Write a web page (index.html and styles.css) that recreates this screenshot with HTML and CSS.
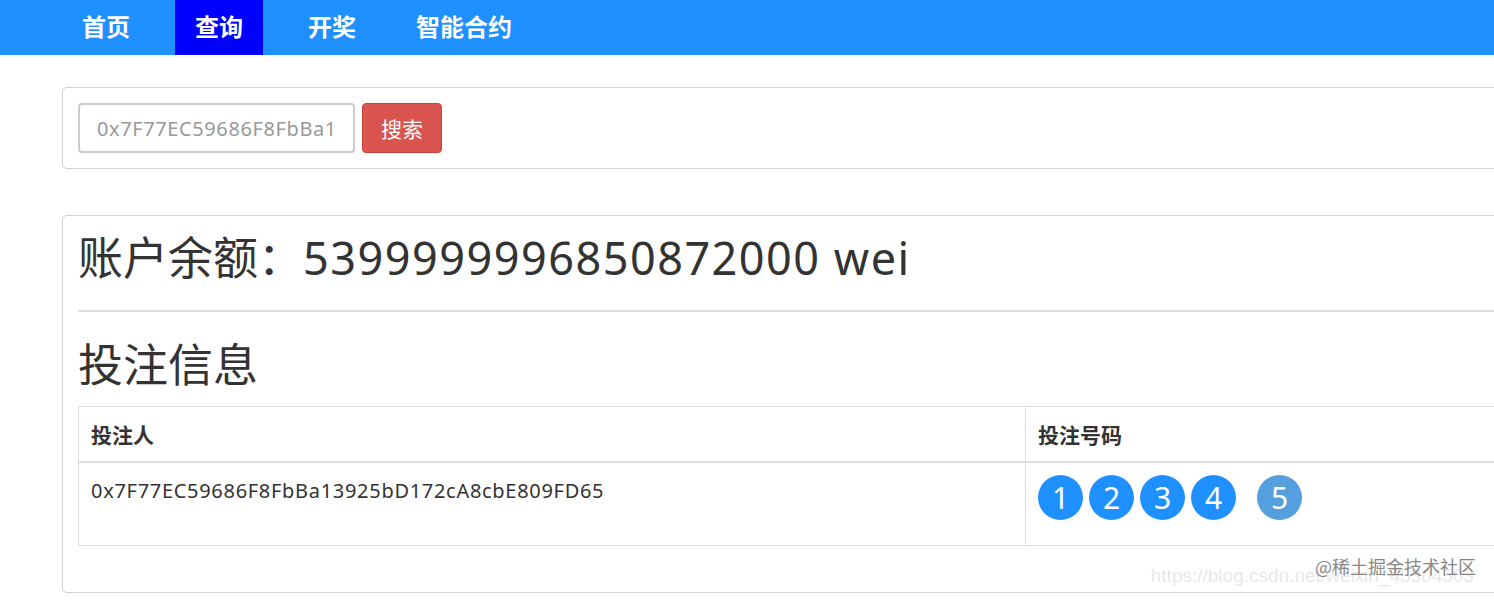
FILE: index.html
```html
<!DOCTYPE html>
<html lang="zh-CN">
<head>
<meta charset="utf-8">
<title>查询</title>
<link rel="stylesheet" href="styles.css">
</head>
<body>
<nav class="navbar">
  <ul class="nav">
    <li class="nav-item">首页</li>
    <li class="nav-item active">查询</li>
    <li class="nav-item">开奖</li>
    <li class="nav-item last">智能合约</li>
  </ul>
</nav>
<main class="container">
  <section class="panel search-panel">
    <input class="search-input" type="text" placeholder="0x7F77EC59686F8FbBa13925bD172cA8cbE809FD65">
    <button class="btn-danger" type="button">搜索</button>
  </section>
  <section class="panel result-panel">
    <h1 class="balance">账户余额：<span class="latin">5399999996850872000 wei</span></h1>
    <hr class="divider">
    <h2 class="section-title">投注信息</h2>
    <table class="bet-table">
      <thead>
        <tr>
          <th class="col-player">投注人</th>
          <th>投注号码</th>
        </tr>
      </thead>
      <tbody>
        <tr>
          <td class="col-player">0x7F77EC59686F8FbBa13925bD172cA8cbE809FD65</td>
          <td>
            <div class="balls">
              <span class="ball">1</span>
              <span class="ball">2</span>
              <span class="ball">3</span>
              <span class="ball">4</span>
              <span class="ball special">5</span>
            </div>
          </td>
        </tr>
      </tbody>
    </table>
  </section>
</main>
<div class="watermark">
  <span class="wm-url">https://blog.csdn.net/weixin_45304503</span>
  <span class="wm-main">@稀土掘金技术社区</span>
</div>
</body>
</html>
```
FILE: styles.css
```css
html, body {
  margin: 0;
  padding: 0;
}
body {
  font-family: "Noto Sans CJK SC", "Noto Sans", sans-serif;
  color: #333;
  background: #fff;
  overflow: hidden;
  width: 1494px;
  height: 601px;
  position: relative;
}
.navbar {
  background: #1e90ff;
  height: 55px;
}
.nav {
  list-style: none;
  margin: 0;
  padding: 0 0 0 62px;
  display: flex;
  height: 55px;
  gap: 25px;
}
.nav-item {
  padding: 0 20px 5px;
  box-sizing: border-box;
  font-size: 24px;
  font-weight: 700;
  color: #fff;
  display: flex;
  align-items: center;
  height: 55px;
}
.nav-item.active {
  background: #0000ff;
}
.nav-item.last {
  margin-left: -5px;
}
.container {
  padding: 32px 0 0 62px;
  width: 1600px;
}
.panel {
  border: 1px solid #d4d4d4;
  border-radius: 5px;
  padding: 15px;
  box-sizing: border-box;
  width: 1560px;
}
.search-panel {
  display: flex;
  gap: 7px;
  height: 82px;
}
.search-input {
  width: 277px;
  height: 50px;
  box-sizing: border-box;
  border: 2px solid #ccc;
  border-radius: 4px;
  padding: 0 16px 0 17px;
  font-family: "Noto Sans", "Noto Sans CJK SC", sans-serif;
  font-size: 20px;
  letter-spacing: 0.6px;
  color: #555;
}
.search-input::placeholder {
  color: #999;
}
.btn-danger {
  width: 80px;
  height: 50px;
  background: #d9534f;
  border: 1px solid #d43f3a;
  border-radius: 4px;
  color: #fff;
  font-family: "Noto Sans CJK SC", sans-serif;
  font-size: 21px;
  padding: 0;
}
.result-panel {
  margin-top: 46px;
  padding-bottom: 46px;
}
.balance {
  font-size: 45px;
  font-weight: 400;
  margin: 0;
  line-height: 50px;
  height: 64px;
  color: #333;
}
.latin {
  font-family: "Noto Sans", sans-serif;
  letter-spacing: 1.5px;
}
.divider {
  border: 0;
  border-top: 2px solid #ddd;
  margin: 15px 0 0;
}
.section-title {
  font-size: 45px;
  font-weight: 400;
  margin: 22px 0 0;
  line-height: 58px;
  height: 72px;
  color: #333;
}
.bet-table {
  border-collapse: collapse;
  width: 1600px;
  border: 1px solid #ddd;
  font-size: 21px;
}
.bet-table th,
.bet-table td {
  border: 1px solid #ddd;
  text-align: left;
  vertical-align: top;
  padding: 0 12px;
}
.bet-table th {
  height: 54px;
  font-weight: 700;
  vertical-align: middle;
  border-bottom: 2px solid #ddd;
}
.col-player {
  width: 922px;
}
.bet-table td {
  height: 83px;
  padding-top: 14px;
  font-family: "Noto Sans", "Noto Sans CJK SC", sans-serif;
  font-size: 20px;
  letter-spacing: 0.7px;
  line-height: 27px;
  box-sizing: border-box;
}
.balls {
  display: flex;
  align-items: center;
  gap: 6px;
  margin-top: -2px;
  letter-spacing: 0;
}
.ball {
  width: 45px;
  height: 45px;
  border-radius: 50%;
  background: #1e90ff;
  color: #fff;
  display: flex;
  align-items: center;
  justify-content: center;
  font-size: 30px;
  font-family: "Noto Sans", sans-serif;
}
.ball.special {
  background: #559fdf;
  margin-left: 15px;
}
.watermark {
  position: absolute;
  right: 18px;
  bottom: 14px;
  width: 300px;
  height: 40px;
}
.wm-url {
  position: absolute;
  right: 2px;
  bottom: 0;
  font-family: "Liberation Sans", sans-serif;
  font-size: 19px;
  color: rgba(215, 215, 215, 0.6);
  white-space: nowrap;
}
.wm-main {
  position: absolute;
  right: 0;
  bottom: 8px;
  font-size: 18px;
  color: #888;
  white-space: nowrap;
}
```
